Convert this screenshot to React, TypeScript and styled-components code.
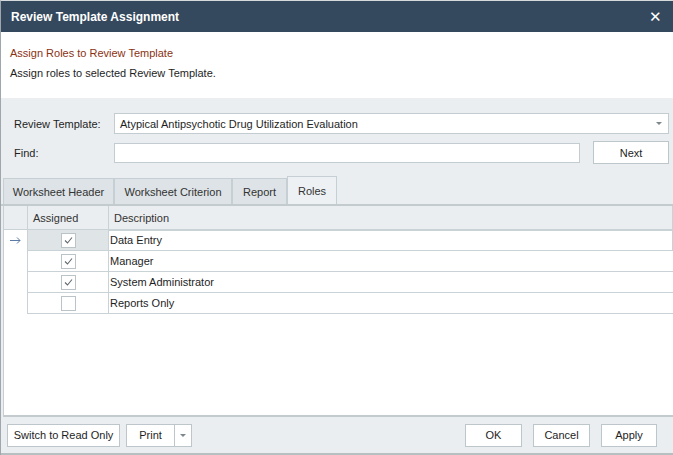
import React from 'react';
import styled, { createGlobalStyle } from 'styled-components';

const GlobalStyle = createGlobalStyle`
  html, body {
    margin: 0;
    padding: 0;
    background: #ffffff;
  }
  body {
    font-family: 'Liberation Sans', Arial, sans-serif;
    font-size: 11px;
    color: #1e1e1e;
  }
`;

const Window = styled.div`
  width: 673px;
  height: 455px;
  box-sizing: border-box;
  border-top: 1px solid #d6dadd;
  border-left: 1px solid #9fa7ac;
  display: flex;
  flex-direction: column;
  overflow: hidden;
`;

const TitleBar = styled.div`
  height: 31px;
  flex: none;
  margin-left: -1px;
  background: #35495e;
  color: #ffffff;
  font-size: 12px;
  font-weight: bold;
  display: flex;
  align-items: center;
  justify-content: space-between;
  padding: 0 11px 0 11px;
`;

const Close = styled.span`
  font-size: 15px;
  font-weight: normal;
  line-height: 1;
`;

const Intro = styled.div`
  height: 66px;
  flex: none;
  background: #ffffff;
  padding: 14px 0 0 9px;
  box-sizing: border-box;
  display: flex;
  flex-direction: column;
  gap: 6px;
  font-size: 11px;
  line-height: 14px;
`;

const IntroTitle = styled.div`
  color: #8a3212;
`;

const Body = styled.div`
  flex: 1;
  min-height: 0;
  background: #ebeef0;
  display: flex;
  flex-direction: column;
  border-bottom: 2px solid #b7bec2;
`;

const Form = styled.div`
  display: grid;
  grid-template-columns: 100px 1fr;
  row-gap: 7px;
  padding: 15px 4px 0 13px;
  align-items: center;
`;

const Label = styled.div`
  font-size: 11px;
`;

const Field = styled.div<{ $h?: number; $grow?: boolean }>`
  height: ${(p) => p.$h ?? 20}px;
  flex: ${(p) => (p.$grow ? 1 : 'none')};
  box-sizing: border-box;
  border: 1px solid #c3ccd1;
  background: #ffffff;
  display: flex;
  align-items: center;
  padding: 0 5px;
  font-size: 11px;
`;

const ComboText = styled.span`
  flex: 1;
`;

const Arrow = styled.span`
  width: 0;
  height: 0;
  border-left: 3px solid transparent;
  border-right: 3px solid transparent;
  border-top: 3px solid #7d878c;
  margin-right: 1px;
`;

const FindRow = styled.div`
  display: flex;
  align-items: center;
  gap: 13px;
`;

const Button = styled.button<{ $w: number }>`
  width: ${(p) => p.$w}px;
  height: 23px;
  box-sizing: border-box;
  border: 1px solid #bcc6cb;
  background: #ffffff;
  font-family: 'Liberation Sans', Arial, sans-serif;
  font-size: 11px;
  color: #1e1e1e;
  padding: 0;
  display: flex;
  align-items: center;
  justify-content: center;
`;

const Tabs = styled.div`
  display: flex;
  align-items: flex-end;
  margin-top: 12px;
  padding-left: 2px;
  height: 28px;
  border-bottom: 2px solid #c3cbcf;
`;

const Tab = styled.div<{ $w: number; $active?: boolean }>`
  width: ${(p) => p.$w}px;
  height: ${(p) => (p.$active ? 28 : 26)}px;
  box-sizing: border-box;
  border: 1px solid #c6cfd3;
  border-bottom: none;
  background: ${(p) => (p.$active ? '#eef1f3' : '#dde3e6')};
  display: flex;
  align-items: center;
  justify-content: center;
  font-size: 11px;
  color: #333333;
`;

const Grid = styled.div`
  flex: 1;
  margin-left: 2px;
  background: #ffffff;
  border-left: 1px solid #c6cfd3;
  border-bottom: 2px solid #c3cbcf;
  display: flex;
  flex-direction: column;
`;

const GridRow = styled.div<{ $header?: boolean }>`
  display: grid;
  grid-template-columns: 24px 81px 1fr;
  height: ${(p) => (p.$header ? 24 : 21)}px;
  background: ${(p) => (p.$header ? '#ebeef0' : '#ffffff')};
`;

const Indicator = styled.div<{ $header?: boolean }>`
  background: ${(p) => (p.$header ? '#ebeef0' : '#ffffff')};
  display: flex;
  align-items: center;
  justify-content: center;
  border-right: 1px solid #c9d2d6;
  border-bottom: ${(p) => (p.$header ? '1px solid #c9d2d6' : 'none')};
`;

const HeadCell = styled.div`
  display: flex;
  align-items: center;
  padding-left: 5px;
  border-right: 1px solid #c9d2d6;
  border-bottom: 1px solid #c9d2d6;
  font-size: 11px;
  color: #333333;
`;

const CheckCell = styled.div<{ $selected?: boolean }>`
  display: flex;
  align-items: center;
  justify-content: center;
  border-right: 1px solid #c9d2d6;
  border-bottom: 1px solid #c9d2d6;
  background: ${(p) => (p.$selected ? '#dfe4e6' : '#ffffff')};
`;

const Box = styled.div`
  width: 15px;
  height: 15px;
  box-sizing: border-box;
  border: 1px solid #b9c3c8;
  background: #ffffff;
  display: flex;
  align-items: center;
  justify-content: center;
`;

const TextCell = styled.div<{ $focus?: boolean }>`
  display: flex;
  align-items: center;
  padding-left: 1px;
  border-bottom: 1px solid #c9d2d6;
  box-shadow: ${(p) => (p.$focus ? 'inset 0 1px 0 #c9d2d6, inset -1px 0 0 #c9d2d6' : 'none')};
  font-size: 11px;
  color: #1e1e1e;
`;

const Footer = styled.div`
  height: 36px;
  flex: none;
  display: flex;
  align-items: center;
  padding: 0 16px 0 6px;
  gap: 6px;
`;

const Split = styled.div`
  display: flex;
  height: 23px;
  box-sizing: border-box;
  border: 1px solid #bcc6cb;
  background: #ffffff;
`;

const SplitMain = styled.div`
  width: 47px;
  display: flex;
  align-items: center;
  justify-content: center;
  border-right: 1px solid #bcc6cb;
  font-size: 11px;
`;

const SplitDrop = styled.div`
  width: 16px;
  display: flex;
  align-items: center;
  justify-content: center;
`;

const Spacer = styled.div`
  flex: 1;
`;

const ButtonGroup = styled.div`
  display: flex;
  gap: 11px;
`;

const RowArrow = () => (
  <svg width="11" height="7" viewBox="0 0 11 7">
    <path d="M0 3.5 H10 M7 0.5 L10 3.5 L7 6.5" fill="none" stroke="#5b7ca6" strokeWidth="1" />
  </svg>
);

const Check = () => (
  <svg width="11" height="11" viewBox="0 0 11 11">
    <path d="M2 5.5 L4.5 8 L9 2.5" fill="none" stroke="#5f686d" strokeWidth="1.1" />
  </svg>
);

const roles = [
  { name: 'Data Entry', on: true },
  { name: 'Manager', on: true },
  { name: 'System Administrator', on: true },
  { name: 'Reports Only', on: false },
];

export default function App() {
  return (
    <>
      <GlobalStyle />
      <Window>
        <TitleBar>
          <span>Review Template Assignment</span>
          <Close>✕</Close>
        </TitleBar>
        <Intro>
          <IntroTitle>Assign Roles to Review Template</IntroTitle>
          <div>Assign roles to selected Review Template.</div>
        </Intro>
        <Body>
          <Form>
            <Label>Review Template:</Label>
            <Field $h={21}>
              <ComboText>Atypical Antipsychotic Drug Utilization Evaluation</ComboText>
              <Arrow />
            </Field>
            <Label>Find:</Label>
            <FindRow>
              <Field $grow />
              <Button $w={76}>Next</Button>
            </FindRow>
          </Form>
          <Tabs>
            <Tab $w={111}>Worksheet Header</Tab>
            <Tab $w={118}>Worksheet Criterion</Tab>
            <Tab $w={55}>Report</Tab>
            <Tab $w={50} $active>Roles</Tab>
          </Tabs>
          <Grid>
            <GridRow $header>
              <Indicator $header />
              <HeadCell>Assigned</HeadCell>
              <HeadCell>Description</HeadCell>
            </GridRow>
            {roles.map((r, i) => (
              <GridRow key={r.name}>
                <Indicator>{i === 0 && <RowArrow />}</Indicator>
                <CheckCell $selected={i === 0}>
                  <Box>{r.on && <Check />}</Box>
                </CheckCell>
                <TextCell $focus={i === 0}>{r.name}</TextCell>
              </GridRow>
            ))}
          </Grid>
          <Footer>
            <Button $w={113}>Switch to Read Only</Button>
            <Split>
              <SplitMain>Print</SplitMain>
              <SplitDrop>
                <Arrow />
              </SplitDrop>
            </Split>
            <Spacer />
            <ButtonGroup>
              <Button $w={57}>OK</Button>
              <Button $w={57}>Cancel</Button>
              <Button $w={56}>Apply</Button>
            </ButtonGroup>
          </Footer>
        </Body>
      </Window>
    </>
  );
}
